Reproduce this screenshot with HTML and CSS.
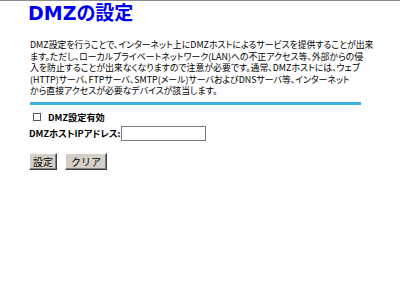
FILE: index.html
```html
<!DOCTYPE html>
<html lang="ja">
<head>
    <meta charset="UTF-8">
    <title>DMZの設定</title>
<link rel="stylesheet" href="styles.css">
</head>
<body>
    <div class="page">
        <h1 class="title">DMZの設定</h1>
        <p class="intro">DMZ設定を行うことで、インターネット上にDMZホストによるサービスを提供することが出来<br>ます。ただし、ローカルプライベートネットワーク(LAN)への不正アクセス等、外部からの侵<br>入を防止することが出来なくなりますので注意が必要です。通常、DMZホストには、ウェブ<br>(HTTP)サーバ、FTPサーバ、SMTP(メール)サーバおよびDNSサーバ等、インターネット<br>から直接アクセスが必要なデバイスが該当します。</p>
        <hr class="sep">
        <form class="settings">
            <label class="check-row">
                <input type="checkbox" class="check">
                <span>DMZ設定有効</span>
            </label>
            <div class="ip-row">
                <span class="ip-label">DMZホストIPアドレス:</span>
                <input type="text" class="ip-input">
            </div>
            <div class="buttons">
                <button type="button" class="btn">設定</button>
                <button type="button" class="btn">クリア</button>
            </div>
        </form>
    </div>
</body>
</html>
```

FILE: styles.css
```css
* {
    margin: 0;
    padding: 0;
    box-sizing: border-box;
}

body {
    background: #fff;
    border-top: 1px solid #8c8c8c;
    font-family: "Noto Sans CJK JP", sans-serif;
    font-feature-settings: "palt";
    color: #000;
}

.page {
    padding: 0 0 0 28px;
    width: 380px;
}

.title {
    font-family: "DejaVu Sans", "Noto Sans CJK JP", sans-serif;
    font-size: 19px;
    font-weight: bold;
    color: #0000ee;
    line-height: 24px;
}

.intro {
    margin: 14px 0 0 2px;
    white-space: nowrap;
    font-size: 8.9px;
    line-height: 11.6px;
}

.sep {
    border: none;
    height: 3px;
    background: #3eb0da;
    width: 331px;
    margin: 5px 0 0 2px;
}

.settings {
    font-size: 9.2px;
    font-weight: bold;
}

.check-row {
    display: flex;
    align-items: center;
    gap: 7px;
    margin: 6px 0 0 5px;
    height: 12px;
}

.check {
    appearance: none;
    width: 8px;
    height: 8px;
    border: 1px solid #555;
    background: #fff;
}

.ip-row {
    display: flex;
    align-items: center;
    margin: 3px 0 0 1px;
}

.ip-input {
    width: 85px;
    height: 15px;
    border: 1px solid #7a7a7a;
    background: #fff;
}

.buttons {
    display: flex;
    gap: 8px;
    margin: 12px 0 0 1px;
}

.btn {
    font-family: "Noto Sans CJK JP", sans-serif;
    font-size: 10px;
    font-weight: normal;
    height: 17px;
    padding: 0 3px;
    background: #d4d0c8;
    border: 1px solid;
    border-color: #fff #404040 #404040 #fff;
    box-shadow: inset -1px -1px 0 #808080;
}

.btn + .btn {
    padding: 0 5px;
}
```
